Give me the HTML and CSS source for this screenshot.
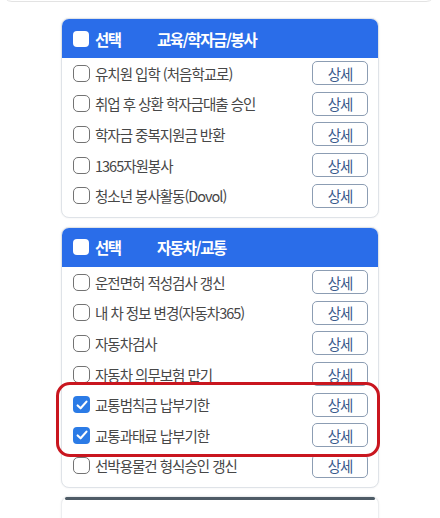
FILE: index.html
```html
<!DOCTYPE html>
<html lang="ko">
<head>
<meta charset="utf-8">
<link rel="stylesheet" href="styles.css">
</head>
<body>
<div class="prev"></div>

<div class="card">
  <div class="head"><span class="hbox"></span><span class="sel">선택</span><span class="cat">교육/학자금/봉사</span></div>
  <div class="row"><span class="cb"></span><span class="label">유치원 입학 (처음학교로)</span><span class="btn">상세</span></div>
  <div class="row"><span class="cb"></span><span class="label">취업 후 상환 학자금대출 승인</span><span class="btn">상세</span></div>
  <div class="row"><span class="cb"></span><span class="label">학자금 중복지원금 반환</span><span class="btn">상세</span></div>
  <div class="row"><span class="cb"></span><span class="label">1365자원봉사</span><span class="btn">상세</span></div>
  <div class="row"><span class="cb"></span><span class="label">청소년 봉사활동(Dovol)</span><span class="btn">상세</span></div>
</div>

<div class="card second">
  <div class="head"><span class="hbox"></span><span class="sel">선택</span><span class="cat">자동차/교통</span></div>
  <div class="row"><span class="cb"></span><span class="label">운전면허 적성검사 갱신</span><span class="btn">상세</span></div>
  <div class="row"><span class="cb"></span><span class="label">내 차 정보 변경(자동차365)</span><span class="btn">상세</span></div>
  <div class="row"><span class="cb"></span><span class="label">자동차검사</span><span class="btn">상세</span></div>
  <div class="row"><span class="cb"></span><span class="label">자동차 의무보험 만기</span><span class="btn">상세</span></div>
  <div class="row"><span class="cb on"><svg viewBox="0 0 16 16" width="16" height="16"><path d="M3.6 8.4 L6.6 11.3 L12.5 4.6" fill="none" stroke="#fff" stroke-width="2.1" stroke-linecap="round" stroke-linejoin="round"/></svg></span><span class="label">교통범칙금 납부기한</span><span class="btn">상세</span></div>
  <div class="row"><span class="cb on"><svg viewBox="0 0 16 16" width="16" height="16"><path d="M3.6 8.4 L6.6 11.3 L12.5 4.6" fill="none" stroke="#fff" stroke-width="2.1" stroke-linecap="round" stroke-linejoin="round"/></svg></span><span class="label">교통과태료 납부기한</span><span class="btn">상세</span></div>
  <div class="row"><span class="cb"></span><span class="label">선박용물건 형식승인 갱신</span><span class="btn">상세</span></div>
  <div class="mark"></div>
</div>

<div class="card third"><div class="topline"></div></div>
</body>
</html>
```
FILE: styles.css
```css
html, body {
  margin: 0;
  padding: 0;
  background: #fff;
  overflow: hidden;
}
body {
  font-family: "Noto Sans CJK KR", "Noto Sans", sans-serif;
  color: #3c3c3c;
}
.prev {
  margin: -20px 0 0 2px;
  width: 432px;
  height: 20px;
  border: 1.5px solid #e3e3e3;
  border-radius: 10px;
}
.card {
  position: relative;
  margin: 16px 0 0 61px;
  width: 316px;
  border: 1px solid #dfe3e8;
  border-radius: 8px;
  padding-bottom: 6px;
  box-shadow: 0 0 2px rgba(0, 0, 0, 0.08);
  background: #fff;
}
.second { margin-top: 9px; }
.third {
  margin-top: 8px;
  height: 40px;
  padding: 0;
  border-color: #eceef0;
}
.topline {
  margin: 0 3px;
  height: 2.5px;
  background: #4e5b66;
  border-radius: 2px;
}
.head {
  display: flex;
  align-items: center;
  height: 39px;
  padding-left: 11px;
  background: #2a6de9;
  border-radius: 7px 7px 0 0;
  color: #fff;
  font-weight: 700;
  font-size: 15.5px;
  letter-spacing: -1.4px;
}
.hbox {
  width: 16px;
  height: 16px;
  border-radius: 4px;
  background: #fff;
  margin-right: 6px;
}
.sel {
  width: 62px;
}
.cat {
  font-weight: 600;
}
.row {
  display: flex;
  align-items: center;
  height: 30.6px;
  padding: 0 10px 0 11px;
}
.cb {
  box-sizing: border-box;
  width: 17px;
  height: 17px;
  border: 1.5px solid #737373;
  border-radius: 5px;
  margin-right: 5px;
  flex: none;
}
.cb.on {
  border: none;
  background: #2b7be6;
  border-radius: 4px;
  display: flex;
  align-items: center;
  justify-content: center;
}
.label {
  font-size: 14.5px;
  letter-spacing: -1px;
  color: #474747;
  white-space: nowrap;
}
.btn {
  margin-left: auto;
  box-sizing: border-box;
  width: 56px;
  height: 24px;
  border: 1px solid #8c9db3;
  border-radius: 5px;
  display: flex;
  align-items: center;
  justify-content: center;
  font-size: 14.5px;
  letter-spacing: -1px;
  color: #3a5a8c;
  background: #fff;
}
.mark {
  position: absolute;
  left: -6px;
  top: 154px;
  width: 318px;
  height: 69px;
  border: 3px solid #c9161f;
  border-radius: 14px;
  pointer-events: none;
}
```
